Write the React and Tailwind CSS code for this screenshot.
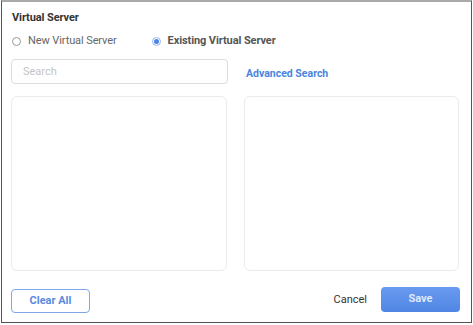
import { useState } from "react";

function Radio({ checked }) {
  return (
    <span
      className={`flex h-[9px] w-[9px] items-center justify-center rounded-full border ${
        checked ? "border-[#9bb8ee]" : "border-[#999]"
      }`}
    >
      {checked && <span className="h-[5px] w-[5px] rounded-full bg-[#4a84e8]" />}
    </span>
  );
}

export default function App() {
  const [mode, setMode] = useState("existing");

  return (
    <div className="h-[325px] w-[473px] bg-white font-['Roboto',sans-serif]">
      <div className="ml-px flex h-[323px] w-[471px] flex-col border-x border-b border-t-2 border-x-[#555] border-b-[#555] border-t-[#a9a9a9] px-[9px]">
        <h3 className="mt-[8px] pl-[1px] text-[11px] font-bold leading-[16px] tracking-[-0.1px] text-[#333]">Virtual Server</h3>

        <div className="mt-[7px] flex h-[16px] items-center text-[11px] leading-[16px] tracking-[-0.1px]">
          <button className="ml-[1px] flex items-center gap-[7px] text-[#666]" onClick={() => setMode("new")}>
            <Radio checked={mode === "new"} />
            New Virtual Server
          </button>
          <button
            className="ml-[35px] flex items-center gap-[7px] font-bold text-[#555]"
            onClick={() => setMode("existing")}
          >
            <Radio checked={mode === "existing"} />
            Existing Virtual Server
          </button>
        </div>

        <div className="mt-[10px] flex h-[25px] items-center">
          <input
            className="h-[25px] w-[217px] rounded-[4px] border border-[#ddd] px-[11px] text-[11px] text-[#333] outline-none placeholder:text-[#c4c4c4]"
            placeholder="Search"
          />
          <a className="ml-[18px] mt-[5px] text-[10.5px] font-bold text-[#4a84e0]" href="#">
            Advanced Search
          </a>
        </div>

        <div className="mt-[12px] flex gap-[17px]">
          <div className="h-[175px] w-[216px] rounded-[6px] border border-[#ebebeb]" />
          <div className="h-[175px] w-[215px] rounded-[6px] border border-[#ebebeb]" />
        </div>

        <div className="mt-[16px] flex items-start">
          <button className="mt-[2px] h-[24px] w-[79px] rounded-[4px] border border-[#80a6ea] text-[11px] font-bold text-[#5a8be0]">
            Clear All
          </button>
          <button className="ml-auto mt-[5px] text-[11px] leading-[16px] text-[#333]">Cancel</button>
          <button className="ml-[14px] mr-[2px] h-[25px] w-[79px] rounded-[4px] bg-gradient-to-b from-[#6a9af0] to-[#4f86e4] text-[11px] font-bold text-[#dfe9fb]">
            Save
          </button>
        </div>
      </div>
    </div>
  );
}
